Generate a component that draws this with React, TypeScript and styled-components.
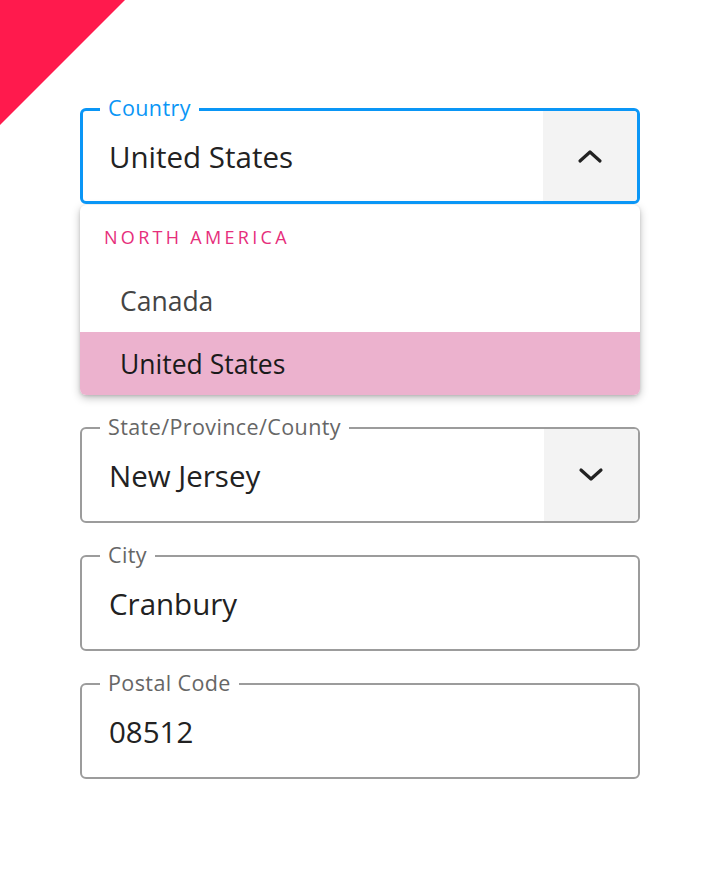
import React from "react";
import styled, { createGlobalStyle } from "styled-components";

const Global = createGlobalStyle`
  html, body { margin: 0; padding: 0; background: #fff; }
  body { font-family: "Open Sans", "Noto Sans", sans-serif; }
`;

const Page = styled.div`
  position: relative;
  width: 720px;
  height: 888px;
  background: #fff;
  overflow: hidden;
`;

const Corner = styled.div`
  position: absolute;
  left: 0;
  top: 0;
  width: 125px;
  height: 125px;
  background: #ff1a4d;
  clip-path: polygon(0 0, 100% 0, 0 100%);
`;

const Form = styled.div`
  display: flex;
  flex-direction: column;
  gap: 32px;
  padding: 108px 80px 0 80px;
`;

const Group = styled.div`
  display: flex;
  flex-direction: column;
  gap: 1px;
`;

const Field = styled.div<{ $focused?: boolean }>`
  position: relative;
  box-sizing: border-box;
  height: 96px;
  display: flex;
  align-items: stretch;
  border: ${(p) => (p.$focused ? "3px solid #0a96f6" : "2px solid #9c9c9c")};
  border-radius: 6px;
`;

const Label = styled.span<{ $focused?: boolean }>`
  position: absolute;
  top: ${(p) => (p.$focused ? -16 : -15)}px;
  left: ${(p) => (p.$focused ? 17 : 18)}px;
  padding: 0 8px;
  background: #fff;
  font-size: 21.5px;
  line-height: 26px;
  letter-spacing: 0.4px;
  color: ${(p) => (p.$focused ? "#0a96f6" : "#666")};
`;

const Value = styled.div<{ $focused?: boolean }>`
  flex: 1;
  display: flex;
  align-items: center;
  padding-left: ${(p) => (p.$focused ? 26 : 27)}px;
  font-size: 29.5px;
  color: #222;
`;

const Toggle = styled.div`
  width: 94px;
  display: flex;
  align-items: center;
  justify-content: center;
  background: #f3f3f3;
  border-radius: 0 4px 4px 0;
`;

const Menu = styled.div`
  display: flex;
  flex-direction: column;
  background: #fff;
  border-radius: 6px;
  overflow: hidden;
  box-shadow: 0 3px 8px rgba(0, 0, 0, 0.25), 0 1px 3px rgba(0, 0, 0, 0.12);
`;

const GroupHeader = styled.div`
  height: 64px;
  display: flex;
  align-items: center;
  padding-left: 24px;
  font-size: 18px;
  letter-spacing: 3.3px;
  color: #e62e7b;
`;

const Option = styled.div<{ $selected?: boolean }>`
  height: 63px;
  display: flex;
  align-items: center;
  padding-left: 40px;
  font-size: 26.5px;
  color: ${(p) => (p.$selected ? "#1a1a1a" : "#444")};
  background: ${(p) => (p.$selected ? "#ecb2ce" : "#fff")};
`;

const Chevron = ({ up }: { up?: boolean }) => (
  <svg width="26" height="16" viewBox="0 0 26 16">
    <polyline
      points={up ? "3,13 13,4 23,13" : "3,3 13,12 23,3"}
      fill="none"
      stroke="#222"
      strokeWidth="3.2"
      strokeLinecap="round"
      strokeLinejoin="round"
    />
  </svg>
);

export default function App() {
  return (
    <>
      <Global />
      <Page>
        <Corner />
        <Form>
          <Group>
            <Field $focused>
              <Label $focused>Country</Label>
              <Value $focused>United States</Value>
              <Toggle>
                <Chevron up />
              </Toggle>
            </Field>
            <Menu>
              <GroupHeader>NORTH AMERICA</GroupHeader>
              <Option>Canada</Option>
              <Option $selected>United States</Option>
            </Menu>
          </Group>
          <Field>
            <Label>State/Province/County</Label>
            <Value>New Jersey</Value>
            <Toggle>
              <Chevron />
            </Toggle>
          </Field>
          <Field>
            <Label>City</Label>
            <Value>Cranbury</Value>
          </Field>
          <Field>
            <Label>Postal Code</Label>
            <Value>08512</Value>
          </Field>
        </Form>
      </Page>
    </>
  );
}
